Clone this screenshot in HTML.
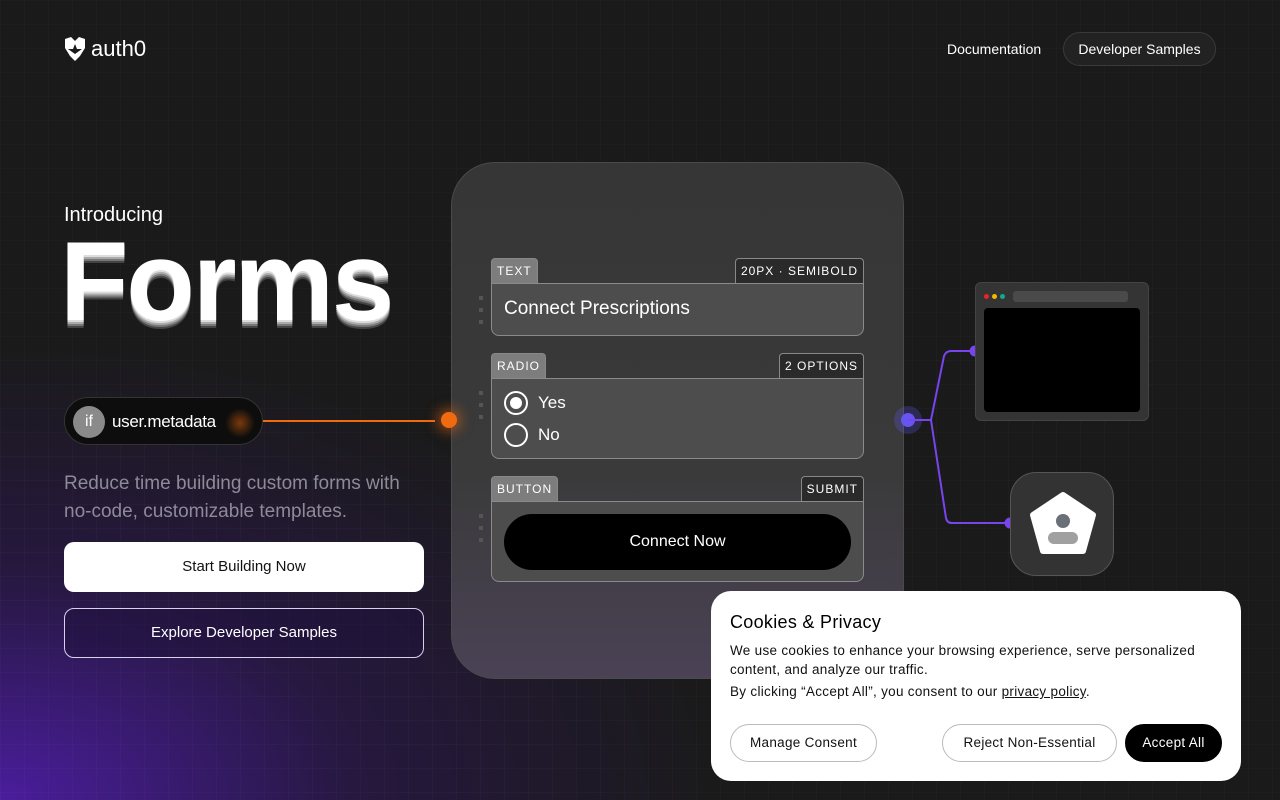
<!DOCTYPE html>
<html><head><meta charset="utf-8"><style>
*{box-sizing:border-box;margin:0;padding:0}
body{width:1280px;height:800px;overflow:hidden;font-family:"Liberation Sans",sans-serif;color:#fff;position:relative;
background:
radial-gradient(ellipse 720px 460px at 0px 800px,rgba(90,30,200,.75),rgba(60,20,130,.35) 50%,rgba(0,0,0,0) 100%),
linear-gradient(#1a1a1a,#1a1a1a);}
.grid{position:absolute;inset:0;background-image:linear-gradient(rgba(255,255,255,.02) 1px,transparent 1px),linear-gradient(90deg,rgba(255,255,255,.02) 1px,transparent 1px);background-size:24px 24px}
.abs{position:absolute}
.logo{left:64px;top:36px;display:flex;align-items:center;gap:5px;font-size:22px}
.nav1{left:947px;top:41px;font-size:14px}
.nav2{left:1063px;top:32px;width:153px;height:34px;border:1px solid #3a3a3a;border-radius:17px;background:#222;font-size:14px;text-align:center;line-height:32px}
.intro{left:64px;top:204px;font-size:20px}
.forms{left:60px;top:226px;font-size:112px;font-weight:bold;letter-spacing:-2px;line-height:1;text-shadow:0 2px 0 #ddd,0 4px 0 #aaa,0 6px 0 #777,0 8px 0 #444}
.pill{left:64px;top:397px;width:199px;height:48px;border-radius:24px;background:#0d0d0d;border:1px solid #333;overflow:hidden}
.pill .if{position:absolute;left:8px;top:8px;width:32px;height:32px;border-radius:50%;background:#8a8a8a;text-align:center;line-height:32px;font-size:16px}
.pill .t{position:absolute;left:47px;top:14px;font-size:17px;letter-spacing:-.3px}
.pill .g{position:absolute;left:160px;top:10px;width:30px;height:30px;border-radius:50%;background:radial-gradient(#7a3a0a,transparent 70%)}
.desc{left:64px;top:470px;font-size:19px;line-height:28px;color:#8e8a99;width:365px}
.b1{left:64px;top:542px;width:360px;height:50px;background:#fff;color:#111;border-radius:10px;text-align:center;line-height:50px;font-size:15px}
.b2{left:64px;top:608px;width:360px;height:50px;border:1px solid #d9d0f0;color:#fff;border-radius:10px;text-align:center;line-height:48px;font-size:15px;background:rgba(30,15,60,.5)}
.card{left:451px;top:162px;width:453px;height:517px;border-radius:44px;border:1px solid #4a4a4a;background:linear-gradient(#363636,#3a3a3a 60%,#4a4255)}
.blk{position:absolute;left:491px;width:373px}
.tag{position:absolute;top:0;height:26px;font-size:12px;letter-spacing:1px;line-height:25px;padding:0 5px;border:1px solid #888;border-bottom:none;border-radius:4px 4px 0 0}
.tl{left:0;background:#7d7d7d}
.tr{right:0;background:#2a2a2a}
.box{position:absolute;top:25px;left:0;right:0;border:1px solid #8a8a8a;border-radius:0 0 8px 8px;background:#4d4d4d}
.dots{position:absolute;left:-12px;width:5px}
.dots i{display:block;width:4px;height:4px;background:#555;margin-bottom:8px}
.radio{display:flex;align-items:center;gap:10px;font-size:17px;height:32px}
.radio b{width:24px;height:24px;border:2.5px solid #fff;border-radius:50%;display:flex;align-items:center;justify-content:center}
.radio b i{width:12px;height:12px;background:#fff;border-radius:50%}
.line{height:2px;background:#f06a10;left:263px;top:420px;width:172px}
.odot{left:441px;top:412px;width:16px;height:16px;border-radius:50%;background:#f06a10;box-shadow:0 0 12px 4px rgba(240,106,16,.5)}
.browser{left:975px;top:282px;width:174px;height:139px;border-radius:6px;background:#343434;border:1px solid #444}
.ukey{left:1010px;top:472px;width:104px;height:104px;border-radius:26px;background:#333;border:1px solid #555}
.cookie{left:711px;top:591px;width:530px;height:190px;background:#fff;border-radius:20px;color:#111}
.cookie h3{position:absolute;left:19px;top:21px;font-size:18px;font-weight:normal;letter-spacing:.3px;color:#000}
.cookie p{position:absolute;left:19px;font-size:13.5px;line-height:19px;width:495px;letter-spacing:.3px}
.cb{position:absolute;top:133px;height:38px;border-radius:19px;border:1px solid #bbb;font-size:13.5px;line-height:36px;text-align:center;letter-spacing:.3px}
</style></head><body>
<div class="grid"></div>
<div class="abs logo"><svg width="22" height="26" viewBox="0 0 22 26"><path d="M1 3 L7 1 L11 5 L15 1 L21 3 L21 12 L16 20 L11 25 L6 20 L1 12 Z" fill="#fff"/><path d="M11 8 L13 13 L18 13 L11 18 L4 13 L9 13Z" fill="#1a1a1a"/></svg><span>auth0</span></div>
<div class="abs nav1">Documentation</div>
<div class="abs nav2">Developer Samples</div>
<div class="abs intro">Introducing</div>
<div class="abs forms">Forms</div>
<div class="abs pill"><div class="g"></div><div class="if">if</div><div class="t">user.metadata</div></div>
<div class="abs line"></div>
<div class="abs desc">Reduce time building custom forms with no-code, customizable templates.</div>
<div class="abs b1">Start Building Now</div>
<div class="abs b2">Explore Developer Samples</div>
<div class="abs card"></div>
<div class="abs odot"></div>
<div class="blk" style="top:258px;height:79px">
 <div class="tag tl">TEXT</div><div class="tag tr">20PX · SEMIBOLD</div>
 <div class="box" style="height:53px;padding:14px 12px;font-size:19px">Connect Prescriptions</div>
 <div class="dots" style="top:38px"><i></i><i></i><i></i></div>
</div>
<div class="blk" style="top:353px;height:107px">
 <div class="tag tl">RADIO</div><div class="tag tr">2 OPTIONS</div>
 <div class="box" style="height:81px;padding:8px 12px">
  <div class="radio"><b><i></i></b>Yes</div><div class="radio"><b></b>No</div></div>
 <div class="dots" style="top:38px"><i></i><i></i><i></i></div>
</div>
<div class="blk" style="top:476px;height:107px">
 <div class="tag tl">BUTTON</div><div class="tag tr">SUBMIT</div>
 <div class="box" style="height:81px;padding:12px 12px"><div style="background:#000;height:56px;border-radius:28px;text-align:center;line-height:56px;font-size:16px">Connect Now</div></div>
 <div class="dots" style="top:38px"><i></i><i></i><i></i></div>
</div>
<svg class="abs" style="left:880px;top:330px" width="150" height="210"><circle cx="28" cy="90" r="14" fill="rgba(100,90,255,.25)"/><circle cx="28" cy="90" r="7" fill="#6655ee"/><path d="M28 90 H51 L64 26 Q66 21 71 21 H95 M51 90 L66 188 Q67 193 72 193 H130" stroke="#7744ee" stroke-width="2" fill="none"/><circle cx="95" cy="21" r="5.5" fill="#7744ee"/><circle cx="130" cy="193" r="5.5" fill="#7744ee"/></svg>
<div class="abs browser">
 <div style="position:absolute;left:8px;top:11px;display:flex;gap:3px"><i style="width:5px;height:5px;border-radius:50%;background:#e22"></i><i style="width:5px;height:5px;border-radius:50%;background:#eb0"></i><i style="width:5px;height:5px;border-radius:50%;background:#1a8"></i></div>
 <div style="position:absolute;left:37px;top:8px;width:115px;height:11px;background:#4a4a4a;border-radius:3px"></div>
 <div style="position:absolute;left:8px;top:25px;width:156px;height:104px;background:#000;border-radius:4px"></div>
</div>
<div class="abs ukey"><svg width="104" height="104" viewBox="0 0 104 104"><path d="M52 22 L82 42 L72 78 L32 78 L22 42Z" fill="#fff" stroke="#fff" stroke-width="6" stroke-linejoin="round"/><circle cx="52" cy="48" r="7" fill="#6a6f78"/><rect x="37" y="59" width="30" height="12" rx="6" fill="#a0a0a0"/></svg></div>
<div class="abs cookie">
 <h3>Cookies &amp; Privacy</h3>
 <p style="top:50px">We use cookies to enhance your browsing experience, serve personalized content, and analyze our traffic.</p>
 <p style="top:91px">By clicking “Accept All”, you consent to our <u>privacy policy</u>.</p>
 <div class="cb" style="left:19px;width:147px">Manage Consent</div>
 <div class="cb" style="left:231px;width:175px">Reject Non-Essential</div>
 <div class="cb" style="left:414px;width:97px;background:#000;color:#fff;border-color:#000">Accept All</div>
</div>
</body></html>
